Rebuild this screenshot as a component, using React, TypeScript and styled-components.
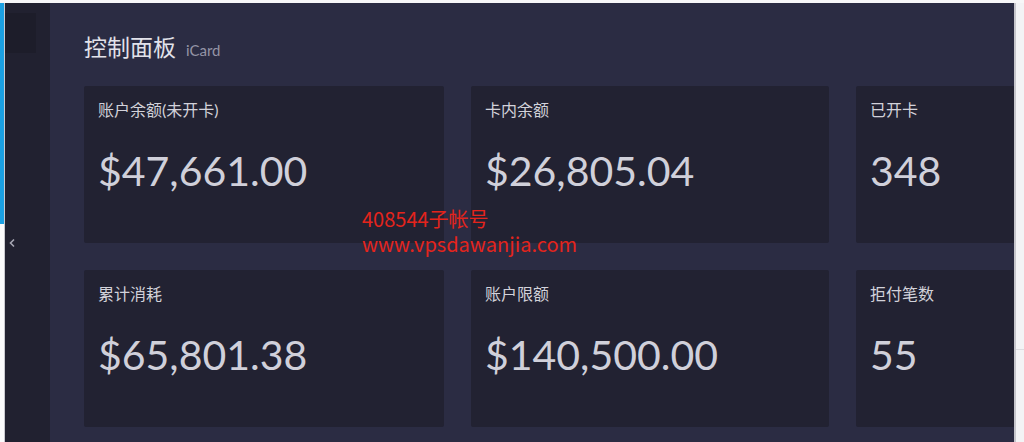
import React from 'react'
import styled, { createGlobalStyle } from 'styled-components'

const GlobalStyle = createGlobalStyle`
  html, body {
    margin: 0;
    padding: 0;
    background: #f4f4f6;
  }
  * {
    box-sizing: border-box;
  }
`

const cjk = `Lato, "Noto Sans CJK SC", sans-serif`

const Frame = styled.div`
  display: flex;
  height: 442px;
  border-top: 3px solid #f7f7f8;
  overflow: hidden;
`

const EdgeStrip = styled.div`
  width: 5px;
  display: flex;
  flex-direction: column;
  background: #fbfbfc;
  border-right: 1px solid #c9c9cf;
`

const BlueBar = styled.div`
  height: 221px;
  background: #1ba0e2;
`

const Sidebar = styled.aside`
  width: 45px;
  background: #212130;
  display: flex;
  flex-direction: column;
`

const LogoBlock = styled.div`
  width: 31px;
  height: 40px;
  margin-top: 10px;
  background: #1d1d2a;
`

const Collapse = styled.div`
  margin: 185px 0 0 3px;
  width: 8px;
  height: 10px;
  color: #a7a7b4;
  display: flex;
`

const Main = styled.main`
  position: relative;
  flex: 1;
  background: #2b2c43;
  padding: 27px 0 0 34px;
  overflow: hidden;
`

const Header = styled.div`
  display: flex;
  align-items: baseline;
  gap: 10px;
  height: 34px;
`

const Title = styled.h1`
  margin: 0;
  font-family: ${cjk};
  font-size: 23px;
  font-weight: 400;
  color: #e2e2ea;
  line-height: 34px;
`

const Sub = styled.span`
  font-family: Lato, sans-serif;
  font-size: 15px;
  color: #9494a6;
`

const Grid = styled.div`
  display: grid;
  grid-template-columns: 360px 358px 360px;
  grid-auto-rows: 157px;
  gap: 27px;
  margin-top: 22px;
`

const Card = styled.div`
  background: #222232;
  border-radius: 2px;
  padding: 13px 14px;
`

const Label = styled.div`
  font-family: ${cjk};
  font-size: 16px;
  line-height: 22px;
  color: #d2d2da;
`

const Value = styled.div`
  margin-top: 26px;
  font-family: Lato, sans-serif;
  font-size: 41px;
  font-weight: 400;
  line-height: 48px;
  color: #d0d0da;
`

const Watermark = styled.div`
  position: absolute;
  left: 312px;
  top: 203px;
  font-family: "Noto Sans CJK SC", sans-serif;
  color: #e4241c;
  font-size: 20px;
  line-height: 25px;
`

const RightStrip = styled.div`
  width: 10px;
  background: #f3f3f5;
  border-left: 2px solid #c6c6cc;
`

const RightRule = styled.div`
  margin-top: 346px;
  height: 1px;
  background: #dcdce0;
`

const stats = [
  { label: '账户余额(未开卡)', value: '$47,661.00' },
  { label: '卡内余额', value: '$26,805.04' },
  { label: '已开卡', value: '348' },
  { label: '累计消耗', value: '$65,801.38' },
  { label: '账户限额', value: '$140,500.00' },
  { label: '拒付笔数', value: '55' },
]

export default function App() {
  return (
    <>
      <GlobalStyle />
      <Frame>
        <EdgeStrip>
          <BlueBar />
        </EdgeStrip>
        <Sidebar>
          <LogoBlock />
          <Collapse>
            <svg width="8" height="10" viewBox="0 0 8 10" fill="none">
              <path d="M6 1.5 2.5 5 6 8.5" stroke="currentColor" strokeWidth="1.6" />
            </svg>
          </Collapse>
        </Sidebar>
        <Main>
          <Header>
            <Title>控制面板</Title>
            <Sub>iCard</Sub>
          </Header>
          <Grid>
            {stats.map((s) => (
              <Card key={s.label}>
                <Label>{s.label}</Label>
                <Value>{s.value}</Value>
              </Card>
            ))}
          </Grid>
          <Watermark>
            408544子帐号
            <br />
            www.vpsdawanjia.com
          </Watermark>
        </Main>
        <RightStrip>
          <RightRule />
        </RightStrip>
      </Frame>
    </>
  )
}
